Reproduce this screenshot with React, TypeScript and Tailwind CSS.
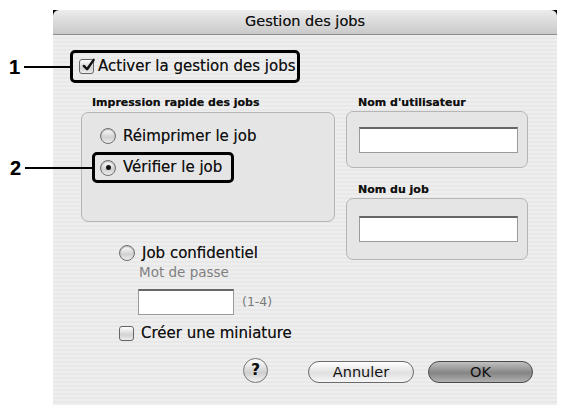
import React from 'react';

const ui = { fontFamily: '"DejaVu Sans", "Liberation Sans", sans-serif' };

function Radio({ checked = false }: { checked?: boolean }) {
    return (
        <span className="flex h-[16px] w-[16px] shrink-0 items-center justify-center rounded-full border border-[#6f6f6f] bg-[linear-gradient(180deg,#ffffff,#d0d0d0_60%,#eeeeee)] shadow-[inset_0_1px_1px_rgba(0,0,0,0.3)]">
            {checked && <span className="h-[5px] w-[5px] rounded-full bg-[#111]" />}
        </span>
    );
}

function Checkbox({ checked = false }: { checked?: boolean }) {
    return (
        <span className="relative flex h-[15px] w-[15px] shrink-0 items-center justify-center rounded-[3px] border border-[#666] bg-[linear-gradient(180deg,#ffffff,#d2d2d2_60%,#ededed)]">
            {checked && (
                <svg viewBox="0 0 16 16" className="absolute -top-[2px] left-[1px] h-[15px] w-[15px]">
                    <path d="M3 8.5 L6.5 12 L13.5 2" fill="none" stroke="#111" strokeWidth="2.6" strokeLinecap="round" strokeLinejoin="round" />
                </svg>
            )}
        </span>
    );
}

function Callout({ n, line }: { n: string; line: string }) {
    return (
        <div className="absolute right-full top-1/2 flex -translate-y-1/2 items-center">
            <span className="text-[20px] font-bold leading-none text-black" style={{ fontFamily: '"Liberation Sans", Arial, sans-serif' }}>{n}</span>
            <span className={`ml-[4px] h-[2px] bg-black ${line}`} />
        </div>
    );
}

function TextField({ w }: { w: string }) {
    return <div className={`h-[26px] ${w} border border-[#9a9a9a] border-t-[2px] border-t-[#666] bg-white`} />;
}

export default function App() {
    return (
        <div className="relative h-[410px] w-[562px] overflow-hidden bg-white text-[#111] [text-shadow:0_0_0.6px_rgba(0,0,0,0.55)]" style={ui}>
            <div className="ml-[53px] mt-[10px] flex h-[395px] w-[504px] flex-col bg-black">
                {/* title bar */}
                <div className="flex h-[25px] shrink-0 items-center justify-center rounded-t-[6px] border-b border-[#8c8c8c] bg-[linear-gradient(180deg,#ececec,#d9d9d9_55%,#c9c9c9)] text-[14.5px]">
                    Gestion des jobs
                </div>

                <div className="flex flex-1 flex-col bg-[repeating-linear-gradient(180deg,#eeeeee_0px,#eeeeee_2px,#e8e8e8_2px,#e8e8e8_4px)] pt-[15px]">
                    {/* activer */}
                    <div className="relative ml-[17px] flex h-[33px] w-[230px] items-center rounded-[5px] border-[3px] border-black pl-[6px]">
                        <Callout n="1" line="w-[49px]" />
                        <Checkbox checked />
                        <span className="ml-[4px] text-[15px]">Activer la gestion des jobs</span>
                    </div>

                    <div className="mt-[13px] flex">
                        {/* left column */}
                        <div className="ml-[28px] flex w-[254px] flex-col">
                            <div className="h-[14px] pl-[11px] text-[11px] font-bold leading-[14px]">Impression rapide des jobs</div>
                            <div className="mt-[2px] flex h-[110px] flex-col rounded-[7px] border border-[#b5b5b5] bg-[#e5e5e5] pt-[13px]">
                                <div className="ml-[18px] flex h-[20px] items-center">
                                    <Radio />
                                    <span className="ml-[7px] text-[15px]">Réimprimer le job</span>
                                </div>
                                <div className="relative ml-[10px] mt-[6px] flex h-[31px] w-[142px] items-center rounded-[5px] border-[3px] border-black pl-[5px]">
                                    <Callout n="2" line="w-[70px]" />
                                    <Radio checked />
                                    <span className="ml-[7px] text-[15px]">Vérifier le job</span>
                                </div>
                            </div>

                            <div className="ml-[38px] mt-[22px] flex h-[18px] items-center">
                                <Radio />
                                <span className="ml-[7px] text-[15px]">Job confidentiel</span>
                            </div>
                            <div className="ml-[58px] mt-[3px] h-[15px] text-[13.5px] leading-[15px] text-[#808080] [text-shadow:none]">Mot de passe</div>
                            <div className="ml-[57px] mt-[9px] flex items-center">
                                <TextField w="w-[96px]" />
                                <span className="ml-[8px] text-[12.5px] text-[#7a7a7a] [text-shadow:none]">(1-4)</span>
                            </div>
                            <div className="ml-[38px] mt-[8px] flex h-[20px] items-center">
                                <Checkbox />
                                <span className="ml-[7px] text-[15px]">Créer une miniature</span>
                            </div>
                        </div>

                        {/* right column */}
                        <div className="ml-[11px] flex w-[182px] flex-col">
                            <div className="h-[14px] pl-[12px] text-[11px] font-bold leading-[14px]">Nom d'utilisateur</div>
                            <div className="mt-[1px] flex h-[57px] items-center rounded-[7px] border border-[#b5b5b5] bg-[#e5e5e5] pl-[12px]">
                                <TextField w="w-[159px]" />
                            </div>
                            <div className="mt-[15px] h-[14px] pl-[12px] text-[11px] font-bold leading-[14px]">Nom du job</div>
                            <div className="mt-[1px] flex h-[62px] items-center rounded-[7px] border border-[#b5b5b5] bg-[#e5e5e5] pl-[12px]">
                                <TextField w="w-[159px]" />
                            </div>
                        </div>
                    </div>

                    {/* buttons */}
                    <div className="mt-[15px] flex h-[25px] items-center">
                        <div className="ml-[190px] flex h-[25px] w-[25px] items-center justify-center rounded-full border border-[#777] bg-[linear-gradient(180deg,#ffffff,#cfcfcf_60%,#f0f0f0)] text-[15px] font-bold">?</div>
                        <button className="ml-[40px] mt-[3px] h-[22px] w-[106px] rounded-full border border-[#6a6a6a] bg-[linear-gradient(180deg,#ffffff,#e0e0e0_55%,#f6f6f6)] text-[14.5px]">Annuler</button>
                        <button className="ml-[14px] mt-[3px] h-[22px] w-[105px] rounded-full border border-[#4a4a4a] bg-[linear-gradient(180deg,#c0c0c0,#858585_55%,#b0b0b0)] text-[14.5px]">OK</button>
                    </div>
                </div>
            </div>
        </div>
    );
}
